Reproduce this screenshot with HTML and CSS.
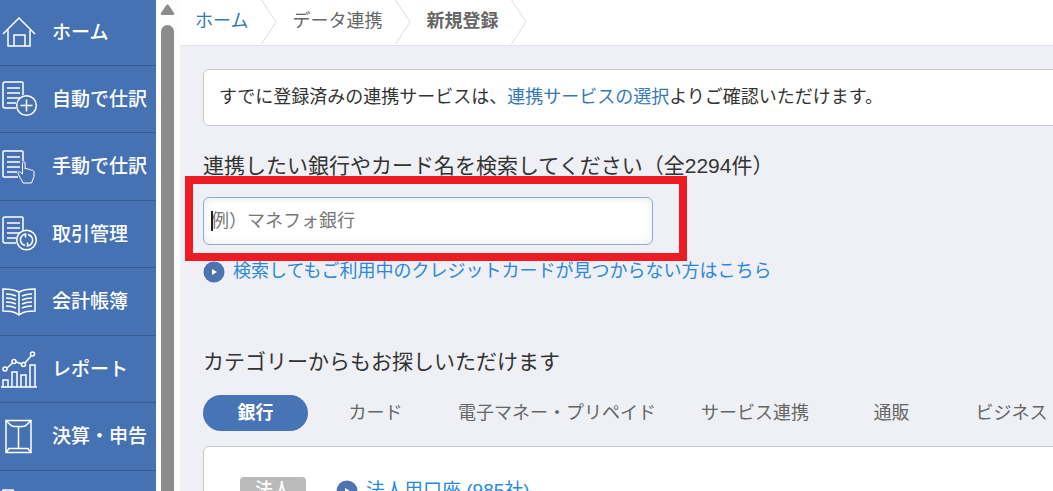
FILE: index.html
```html
<!DOCTYPE html>
<html lang="ja">
<head>
<meta charset="utf-8">
<title>新規登録</title>
<link rel="stylesheet" href="styles.css">
</head>
<body>
<div class="app">
  <nav class="sidebar" aria-label="メインメニュー">
    <a class="nav-item" href="#"><svg class="nav-icon" viewBox="0 0 38 38"><path d="M3 20 19 4 35 20M8 16v16h22V16M14 32V21h11v11"/></svg>ホーム</a>
    <a class="nav-item" href="#"><svg class="nav-icon" viewBox="0 0 38 38"><path d="M16 28H5a2 2 0 0 1-2-2V4a2 2 0 0 1 2-2h17a1 1 0 0 1 1 1v12M7 8h13M7 13h13M7 18h13M7 23h9"/><circle cx="26.500" cy="25.500" r="9.800"/><path d="M26.500 19.500v12M20.500 25.500h12"/></svg>自動で仕訳</a>
    <a class="nav-item" href="#"><svg class="nav-icon" viewBox="0 0 38 38"><path d="M18 29H4a1 1 0 0 1-1-1V4a1 1 0 0 1 1-1h18a1 1 0 0 1 1 1v9M7 9h13M7 14h13M7 19h13M7 24h10"/><path class="thin" d="M22.500 26V15c0-1.600 2.600-1.600 2.600 0v6c1-1 3-.6 3.300.6 1-.7 2.500-.3 2.900.8 1.400-.5 2.700.3 2.700 1.700v4.400L31.500 35H23c-1.500-3-3.500-6.500-5-9.500-.5-1.600 1.300-2.200 2.300-1.200z"/></svg>手動で仕訳</a>
    <a class="nav-item" href="#"><svg class="nav-icon" viewBox="0 0 38 38"><path d="M16 28H5a2 2 0 0 1-2-2V4a2 2 0 0 1 2-2h17a1 1 0 0 1 1 1v12M7 8h13M7 13h13M7 18h13M7 23h9"/><circle cx="26.500" cy="25" r="9.800"/><path d="M23 20c-3 2-3.500 6-1 9M30 30c3-2 3.500-6 1-9M25 30.500l-3-1.500M28 19.500l3 1.500M27.500 27.500V31l3-1M25.500 22.500V19l-3 1"/></svg>取引管理</a>
    <a class="nav-item" href="#"><svg class="nav-icon" viewBox="0 0 38 38"><path d="M19 9C14 6 9 6 3 6v22c6 0 11 0 16 4 5-4 10-4 16-4V6c-6 0-11 0-16 3zv23"/><path d="M6 11c4 0 7 .5 10 2M6 15c4 0 7 .5 10 2M6 19c4 0 7 .5 10 2M6 23c4 0 7 .5 10 2M32 11c-4 0-7 .5-10 2M32 15c-4 0-7 .5-10 2M32 19c-4 0-7 .5-10 2M32 23c-4 0-7 .5-10 2"/></svg>会計帳簿</a>
    <a class="nav-item" href="#"><svg class="nav-icon" viewBox="0 0 38 38"><path d="M1 37h36M3 37v-7h5v7M12 37V22h5v15M21 37V25h5v12M30 37V15h5v22M7 18l5.500-5M16 12l6 2M25 13l6-7"/><circle cx="5" cy="19" r="2"/><circle cx="14" cy="11.500" r="2"/><circle cx="23.500" cy="14.500" r="2"/><circle cx="32.500" cy="4" r="2"/></svg>レポート</a>
    <a class="nav-item" href="#"><svg class="nav-icon" viewBox="0 0 38 38"><path d="M6 2.500h25v32H6zM6 2.500l4 4q2 2 4 2h9q2 0 4-2l4-4M18.500 9v21M6 34.500l3-4h19l3 4"/></svg>決算・申告</a>
    <a class="nav-item" href="#" aria-label="その他"><svg class="nav-icon" viewBox="0 0 38 38"><path d="M3 34V5h10l3 4h18v25z"/></svg></a>
  </nav>
  <div class="scroll" aria-hidden="true">
    <svg class="scroll-arrow" viewBox="0 0 15 12"><path d="M6 1.500Q7.500-.5 9 1.500l5 7.500q1 2-1 2H2Q0 11 1 9z"/></svg>
    <div class="scroll-thumb"></div>
  </div>
  <div class="page">
    <header class="crumbs">
      <a class="crumb" href="#">ホーム</a>
      <svg class="crumb-sep" viewBox="0 0 18 44"><path d="M.5 0l14.500 22L.5 44"/></svg>
      <span class="crumb">データ連携</span>
      <svg class="crumb-sep" viewBox="0 0 18 44"><path d="M.5 0l14.500 22L.5 44"/></svg>
      <strong class="crumb">新規登録</strong>
      <svg class="crumb-sep" viewBox="0 0 18 44"><path d="M.5 0l14.500 22L.5 44"/></svg>
    </header>
    <main class="content">
      <p class="panel notice">すでに登録済みの連携サービスは、<a href="#">連携サービスの選択</a>よりご確認いただけます。</p>
      <h2 class="title"><label for="q">連携したい銀行やカード名を検索してください（全2294件）</label></h2>
      <div class="search">
        <input class="search-input" id="q" type="text" placeholder="例）マネフォ銀行">
        <span class="caret"></span>
        <span class="highlight"></span>
      </div>
      <a class="more" href="#"><svg class="play" viewBox="0 0 22 22"><circle cx="11" cy="11" r="10.500"/><path d="M9 8l5 3-5 3z"/></svg>検索してもご利用中のクレジットカードが見つからない方はこちら</a>
      <h2 class="title category">カテゴリーからもお探しいただけます</h2>
      <div class="tabs">
        <button class="tab active" type="button">銀行</button>
        <button class="tab" type="button">カード</button>
        <button class="tab" type="button">電子マネー・プリペイド</button>
        <button class="tab" type="button">サービス連携</button>
        <button class="tab" type="button">通販</button>
        <button class="tab" type="button">ビジネス</button>
      </div>
      <section class="panel accounts">
        <span class="badge">法人</span>
        <a class="more account-link" href="#"><svg class="play" viewBox="0 0 22 22"><circle cx="11" cy="11" r="10.500"/><path d="M9 8l5 3-5 3z"/></svg>法人用口座 (985社)</a>
      </section>
    </main>
  </div>
</div>
</body>
</html>
```

FILE: styles.css
```css
* { box-sizing: border-box; }
body {
  margin: 0;
  overflow: hidden;
  background: #eff0f5;
  color: #333;
  font: 18px/27px "Liberation Sans", "Noto Sans CJK JP", sans-serif;
}
a { color: #337ab7; text-decoration: none; }
.app { display: flex; height: 100vh; overflow: hidden; }

.sidebar { flex: 0 0 156px; overflow: hidden; background: #4672b4; }
.nav-item {
  display: flex;
  align-items: center;
  gap: 14px;
  height: 68px;
  border-bottom: 1px solid #395b8f;
  color: #fff;
  font-size: 19px;
  font-weight: 500;
  white-space: nowrap;
}
.nav-item:nth-child(even) { height: 67px; }
.nav-item:first-child { height: 66px; }
.nav-icon {
  flex: none;
  width: 38px;
  height: 38px;
  fill: none;
  stroke: #fff;
  stroke-width: 1.5;
}
.nav-icon .thin { stroke-width: 1; }

.scroll {
  flex: 0 0 23px;
  display: flex;
  flex-direction: column;
  gap: 9px;
  padding: 4px 5px 0 4px;
  background: #fcfcfc;
}
.scroll-arrow { flex: none; width: 15px; height: 12px; fill: #8b8b8b; }
.scroll-thumb {
  flex: 1;
  margin: 0 1px;
  border-radius: 7px 7px 0 0;
  background: #8b8b8b;
}

.page { flex: 1; min-width: 0; overflow: hidden; }
.crumbs {
  display: flex;
  align-items: center;
  gap: 13px;
  height: 46px;
  padding: 0 15px 2px;
  border-bottom: 1px solid #e2e2e5;
  background: #fff;
  color: #666;
  white-space: nowrap;
}
.crumb-sep { flex: none; width: 18px; height: 44px; fill: none; stroke: #ddd; }

.content { padding: 23px 0 0 23px; white-space: nowrap; }
.panel {
  margin: 0 -8px 0 0;
  border: 1px solid #c8c9cd;
  border-radius: 6px;
  background: #fff;
}
.notice { padding: 14px 15px; }
.title { margin: 24px 0 0; font-size: 21px; font-weight: 400; line-height: 32px; }
.search { position: relative; width: 450px; margin: 15px 0 13px; }
.search-input {
  display: block;
  width: 100%;
  height: 48px;
  padding: 0 7px;
  border: 1px solid #8fabd8;
  border-radius: 6px;
  outline: 0;
  background: #fff;
  box-shadow: inset 0 0 8px #e6e6e6;
  color: #333;
  font: inherit;
}
.search-input::placeholder { color: #777; opacity: 1; }
.caret { position: absolute; top: 14px; left: 8px; width: 2px; height: 20px; background: #222; }
.highlight {
  position: absolute;
  inset: -21px -34px -16px -18px;
  border: 8px solid #ed1c24;
  pointer-events: none;
}
.more { display: flex; align-items: center; gap: 8px; color: #2b88d9; }
.account-link { font-size: 19px; }
.play { flex: none; width: 22px; height: 22px; fill: #4f73b0; }
.play path { fill: #fff; }
.category { margin-top: 61px; }
.tabs { display: flex; gap: 15px; margin: 17px 0 15px; }
.tab {
  flex: none;
  min-width: 105px;
  height: 36px;
  padding: 0 15px;
  border: 0;
  border-radius: 18px;
  background: none;
  color: #666;
  font: inherit;
}
.tab.active { background: #4874b5; color: #fff; font-weight: 700; }
.accounts { display: flex; align-items: flex-start; gap: 30px; padding: 30px 36px; }
.badge {
  padding: 0 15px;
  border-radius: 4px;
  background: #bababa;
  color: #fff;
  font-weight: 500;
}
```
